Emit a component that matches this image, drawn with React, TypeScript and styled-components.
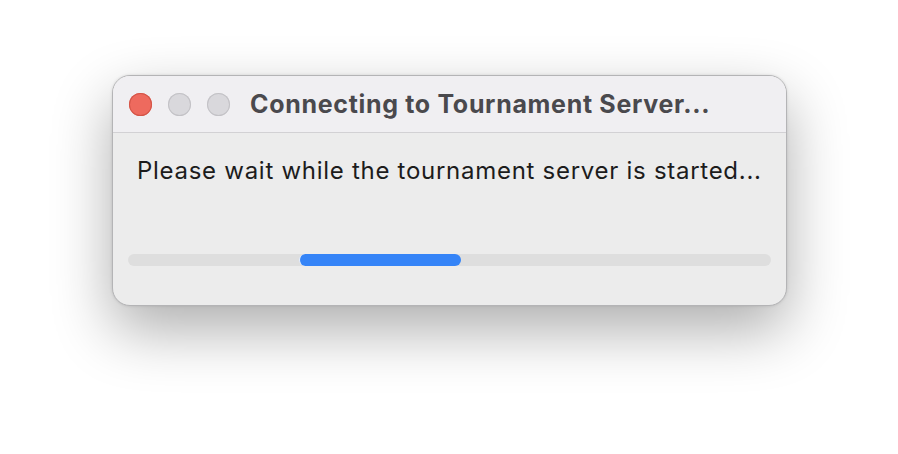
import React from 'react';
import styled, { createGlobalStyle } from 'styled-components';

const GlobalStyle = createGlobalStyle`
  html, body {
    margin: 0;
    padding: 0;
    background: #ffffff;
  }
  body {
    font-family: Inter, "Noto Sans", "Liberation Sans", sans-serif;
    -webkit-font-smoothing: antialiased;
  }
`;

const Desktop = styled.div`
  width: 898px;
  height: 454px;
  padding: 75px 0 0 112px;
  box-sizing: border-box;
`;

const Window = styled.div`
  width: 675px;
  height: 231px;
  box-sizing: border-box;
  border-radius: 18px;
  border: 1px solid #b4b4b6;
  background: #ececec;
  overflow: hidden;
  display: flex;
  flex-direction: column;
  box-shadow: 0 24px 60px rgba(0, 0, 0, 0.32), 0 0 3px rgba(0, 0, 0, 0.12);
`;

const TitleBar = styled.div`
  height: 56px;
  flex: none;
  display: flex;
  align-items: center;
  padding-left: 16px;
  background: #f0eff2;
  border-bottom: 1px solid #d2d1d4;
`;

const Lights = styled.div`
  display: flex;
  gap: 16px;
`;

const Light = styled.span<{ $color: string; $edge: string }>`
  width: 23px;
  height: 23px;
  border-radius: 50%;
  background: ${({ $color }) => $color};
  box-shadow: inset 0 0 0 1px ${({ $edge }) => $edge};
`;

const Title = styled.div`
  margin-left: 20px;
  font-size: 25px;
  font-weight: 700;
  color: #4a494d;
  letter-spacing: 0.68px;
`;

const Body = styled.div`
  flex: 1;
  display: flex;
  flex-direction: column;
  padding: 23px 15px 0 15px;
`;

const Message = styled.div`
  padding-left: 9px;
  font-size: 24px;
  color: #1c1c1c;
  line-height: 30px;
  letter-spacing: 0.72px;
`;

const Track = styled.div`
  margin-top: 68px;
  height: 12px;
  border-radius: 6px;
  background: #dedede;
  position: relative;
  overflow: hidden;
`;

const Bar = styled.div`
  position: absolute;
  top: 0;
  bottom: 0;
  border-radius: 6px;
  background: #3584f7;
  border-left: 1px solid #eaf2ff;
`;

export default function App() {
  const start = 171;
  const width = 161;
  return (
    <>
      <GlobalStyle />
      <Desktop>
        <Window>
          <TitleBar>
            <Lights>
              <Light $color="#ee6a5e" $edge="#d35548" />
              <Light $color="#d9d8dc" $edge="#c3c2c6" />
              <Light $color="#d9d8dc" $edge="#c3c2c6" />
            </Lights>
            <Title>Connecting to Tournament Server...</Title>
          </TitleBar>
          <Body>
            <Message>Please wait while the tournament server is started...</Message>
            <Track>
              <Bar style={{ left: start, width }} />
            </Track>
          </Body>
        </Window>
      </Desktop>
    </>
  );
}
